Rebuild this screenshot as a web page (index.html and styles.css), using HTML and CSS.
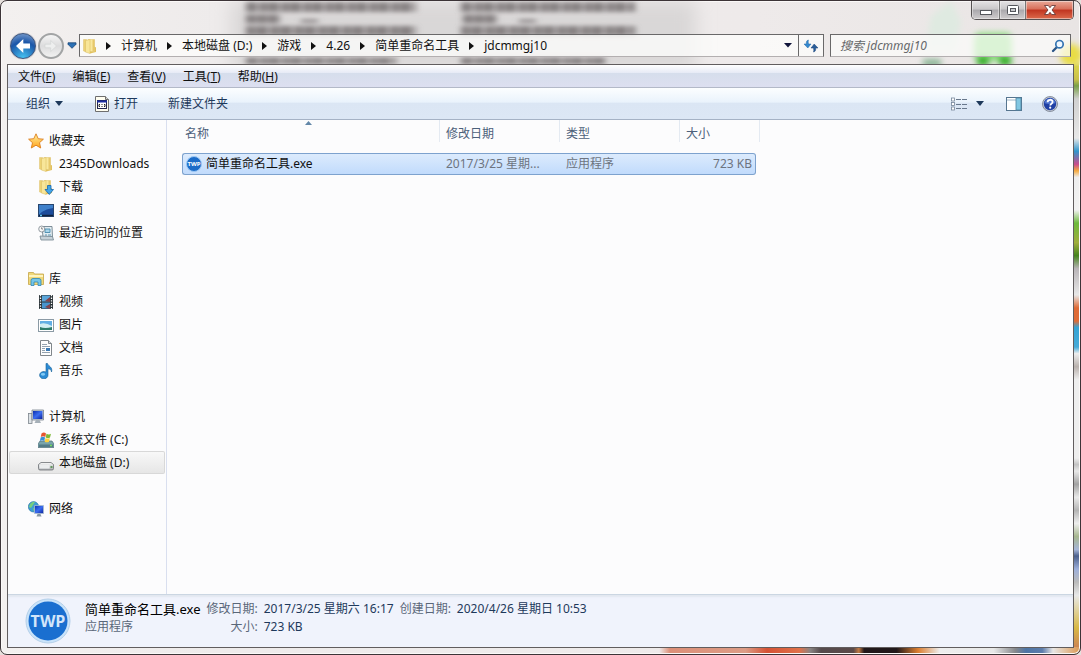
FILE: index.html
```html
<!DOCTYPE html>
<html lang="zh-CN">
<head>
<meta charset="utf-8">
<meta name="viewport" content="width=device-width, initial-scale=1">
<title>jdcmmgj10</title>
<link rel="stylesheet" href="styles.css">
</head>
<body>
<svg class="defs" aria-hidden="true">
  <defs>
    <linearGradient id="folder" x1="0" x2="1"><stop offset="0" stop-color="#f0d673"/><stop offset=".5" stop-color="#fbeca6"/><stop offset="1" stop-color="#dfb950"/></linearGradient>
    <linearGradient id="screen" x1="0" x2="1" y2="1"><stop offset="0" stop-color="#0c2fae"/><stop offset=".5" stop-color="#3b6df0"/><stop offset="1" stop-color="#0a1f9a"/></linearGradient>
    <linearGradient id="star" x2="0" y2="1"><stop offset="0" stop-color="#fff0a0"/><stop offset="1" stop-color="#ffa41c"/></linearGradient>
    <linearGradient id="disk" x2="0" y2="1"><stop offset="0" stop-color="#fafafa"/><stop offset="1" stop-color="#a9adb0"/></linearGradient>
    <symbol id="i-folder" viewBox="0 0 16 16"><path d="M1.500 1.500h3v12.500l-3-1z" fill="#edd273" stroke="#dcc070" stroke-width=".5"/><path d="M6 1.500h6.500v12H6z" fill="url(#folder)" stroke="#dfc36b" stroke-width=".5"/><path d="M3.500 2.500l4.500-1v14l-4.500-1.500z" fill="#f8e699" stroke="#d9bb5f" stroke-width=".5"/><path d="M12.500 8.500l1.500 1v4.500l-6 1.500v-2h4.500z" fill="#e2c15c"/></symbol>
  </defs>
</svg>
<div class="window">
  <svg class="backdrop" width="1000" height="64" viewBox="0 0 1000 64" aria-hidden="true">
    <defs>
      <filter id="soft" x="-20%" y="-50%" width="140%" height="200%"><feGaussianBlur stdDeviation="3 2"/></filter>
      <filter id="haze" x="-60%" y="-60%" width="220%" height="220%"><feGaussianBlur stdDeviation="9"/></filter>
      <filter id="glow" x="-60%" y="-60%" width="220%" height="220%"><feGaussianBlur stdDeviation="3"/></filter>
    </defs>
    <rect x="150" y="0" width="465" height="70" fill="#d9d7d7" filter="url(#haze)"/>
    <g filter="url(#soft)" stroke="#858081" fill="none">
      <path d="M165 6h170M380 6h174" stroke-width="10" stroke-dasharray="11 2 8 1"/>
      <path d="M165 18h34M382 18h34" stroke-width="9" stroke-dasharray="10 1"/>
      <path d="M220 20h17M438 20h17" stroke-width="3"/>
      <path d="M165 30h170M380 30h174" stroke-width="10" stroke-dasharray="9 1 12 2"/>
      <path d="M165 60h150M380 60h145" stroke-width="7" stroke-dasharray="12 2 7 1"/>
    </g>
    <g filter="url(#glow)">
      <path d="M850 15l20-15 10 20-6 30h-30z" fill="#dfeae1"/>
      <path d="M842 62h18" stroke="#7fae8b" stroke-width="7"/>
      <rect x="893" y="32" width="38" height="28" rx="6" fill="#86dc77"/>
      <path d="M896 60h12M918 60h12" stroke="#27ab19" stroke-width="9"/>
      <circle cx="990" cy="54" r="11" fill="#e9dd45"/>
    </g>
  </svg>
  <header class="titlebar">
    <div class="caption">
      <button class="cap" aria-label="最小化"><svg width="14" height="12"><rect x="1.500" y="6.500" width="11" height="4" fill="#fff" stroke="#55575c"/></svg></button>
      <button class="cap cap-max" aria-label="最大化"><svg width="14" height="12"><rect x="1.500" y="1.500" width="11" height="9" rx="1" fill="#fff" stroke="#55575c"/><rect x="4.500" y="4.500" width="5" height="3" fill="#c9c9cc" stroke="#55575c"/></svg></button>
      <button class="cap cap-close" aria-label="关闭"><svg width="14" height="12" viewBox="0 0 14 12"><path d="M1.500 1.500h3.800L7 3.700l1.700-2.200h3.800L9 6l3.500 4.500H8.700L7 8.300l-1.700 2.200H1.500L5 6z" fill="#fff" stroke="#5b3030" stroke-width=".8"/></svg></button>
    </div>
  </header>
  <div class="navrow">
    <div class="travel">
      <button class="back" aria-label="后退"><svg width="18" height="18" viewBox="0 0 18 18"><path d="M9.300 2L2 9l7.300 7v-4.500H16v-5H9.300z" fill="#fff"/></svg></button>
      <button class="forward" aria-label="前进"><svg width="18" height="18" viewBox="0 0 18 18"><path d="M8.700 3.500L14.500 9l-5.800 5.500v-3.700H3V7.200h5.700z" fill="#eeefef" stroke="#d3d5d6" stroke-width=".7"/></svg></button>
      <button class="recent" aria-label="最近的位置"><svg width="10" height="7" viewBox="0 0 10 7"><path d="M1 .8h8v1.500L5 6.300 1 2.300z" fill="#2b70b5" stroke="#1b4474" stroke-width=".8"/></svg></button>
    </div>
    <div class="address">
      <svg width="16" height="16"><use href="#i-folder"/></svg>
      <ol class="crumbs">
        <li><a href="#">计算机</a></li>
        <li><a href="#">本地磁盘 (D:)</a></li>
        <li><a href="#">游戏</a></li>
        <li><a href="#">4.26</a></li>
        <li><a href="#">简单重命名工具</a></li>
        <li><a href="#">jdcmmgj10</a></li>
      </ol>
      <button class="drop" aria-label="以前的位置"><svg width="8" height="5"><path d="M0 0h8L4 4.500z" fill="#10143a"/></svg></button>
      <button class="refresh" aria-label="刷新"><svg width="16" height="14" viewBox="0 0 16 14"><path d="M5.500 1C3.500 1.300 3.200 3 3.300 5H1l3.800 4L8 5H5.500C5.200 3.500 5 2 5.500 1z" fill="#3489cf" stroke="#2066a6" stroke-width=".5"/><path d="M10.500 13c2-.3 2.300-2 2.200-4H15l-3.800-4L8 9h2.500c.3 1.500.5 3 0 4z" fill="#2a5d99" stroke="#1d467c" stroke-width=".5"/></svg></button>
    </div>
    <form class="search">
      <input type="search" aria-label="搜索" placeholder="搜索 jdcmmgj10">
      <button type="button" aria-label="搜索"><svg width="14" height="14" viewBox="0 0 14 14"><path d="M2 12l4-4" stroke="#2a5587" stroke-width="2.300" stroke-linecap="round"/><circle cx="8.500" cy="5.200" r="3.700" fill="#eef7ff" stroke="#3474b2" stroke-width="1.700"/></svg></button>
    </form>
  </div>
  <div class="client">
    <div class="menubar">
      <button>文件(<u>F</u>)</button>
      <button>编辑(<u>E</u>)</button>
      <button>查看(<u>V</u>)</button>
      <button>工具(<u>T</u>)</button>
      <button>帮助(<u>H</u>)</button>
    </div>
    <div class="toolbar">
      <button class="organize">组织 <svg width="8" height="5"><path d="M0 0h8L4 5z" fill="#1e395b"/></svg></button>
      <button class="open"><svg width="14" height="16" viewBox="0 0 14 16"><path d="M.5.500h10l3 3v12H.5z" fill="#fffef0" stroke="#6e6e6e"/><path d="M10.500.5v3h3" fill="#d5d5cc" stroke="#6e6e6e"/><rect x="2.500" y="4.500" width="9" height="8" fill="#fff" stroke="#22264e"/><path d="M2 5.500h10" stroke="#1b2ca0" stroke-width="2"/><path d="M5 8.500h-1v2h1M9 8.500h1v2H9M7 8v1M7 10v1" stroke="#222" fill="none"/></svg>打开</button>
      <button>新建文件夹</button>
      <div class="tools">
        <button aria-label="更改视图"><svg width="16" height="14" viewBox="0 0 16 14"><g fill="#fff" stroke="#76869a" stroke-width=".8"><rect x=".5" y="1" width="3" height="3"/><rect x=".5" y="5.500" width="3" height="3"/><rect x=".5" y="10" width="3" height="3"/></g><path d="M5 2.500h5M11 2.500h5M5 7.500h5M11 7.500h5M5 11.500h5M11 11.500h5" stroke="#68788c"/></svg></button>
        <button class="viewdrop" aria-label="更多选项"><svg width="8" height="5"><path d="M0 0h8L4 5z" fill="#1e395b"/></svg></button>
        <button class="preview" aria-label="显示预览窗格"><svg width="16" height="14" viewBox="0 0 16 14"><rect x=".5" y=".5" width="15" height="13" fill="#fff" stroke="#56758f"/><path d="M1 3h9" stroke="#9eb6c8"/><rect x="10" y="1" width="5" height="12" fill="#82c7e2" stroke="#4f86a3" stroke-width=".8"/></svg></button>
        <button aria-label="帮助"><svg width="16" height="16" viewBox="0 0 16 16"><circle cx="8" cy="8" r="7.500" fill="#c3c9d6" stroke="#747c8c" stroke-width=".8"/><circle cx="8" cy="8" r="6.200" fill="#2040a4"/><path d="M2.500 7a5.600 5.600 0 0 1 11 0c-3 1.500-8 1.500-11 0z" fill="#4f74cf"/><path d="M5.600 6.200c0-3.200 5-3.200 5-.2 0 1.800-2.300 1.700-2.300 3.400" fill="none" stroke="#fff" stroke-width="1.800"/><circle cx="8.200" cy="11.700" r="1.100" fill="#fff"/></svg></button>
      </div>
    </div>
    <main class="panes">
      <nav class="side">
        <ul>
          <li><a class="root" href="#"><svg width="16" height="16" viewBox="0 0 16 16"><path d="M8 .8l2.200 4.900 5.200.5-3.900 3.500 1.200 5.300L8 12.200 3.300 15l1.200-5.300L.6 6.200l5.200-.5z" fill="url(#star)" stroke="#dc7e1c" stroke-width=".9" stroke-linejoin="round"/></svg>收藏夹</a></li>
          <li><a href="#"><svg width="16" height="16"><use href="#i-folder"/></svg>2345Downloads</a></li>
          <li><a href="#"><svg width="16" height="16" viewBox="0 0 16 16"><use href="#i-folder" width="16" height="16"/><path d="M9.500 6.500h3.500v4h2.500L11.300 15.500 7 10.500h2.500z" fill="#42a5e8" stroke="#1666ab" stroke-width=".8"/></svg>下载</a></li>
          <li><a href="#"><svg width="16" height="16" viewBox="0 0 16 16"><rect x=".5" y="2.500" width="15" height="12" fill="#1c4c9b" stroke="#28466e"/><path d="M1 3h14v3C9 7 4 9 1 13z" fill="#3f80ca"/><path d="M1 13.500h14" stroke="#10223f" stroke-width="1.600"/><path d="M2 13.500h2" stroke="#62c6ef" stroke-width="1.500"/></svg>桌面</a></li>
          <li><a href="#"><svg width="16" height="16" viewBox="0 0 16 16"><path d="M4 1.500h10l.5 10.500H5z" fill="#e3edf2" stroke="#71828d" stroke-width=".9"/><path d="M7 4h5v3.500H7zM7 10h2M10 10h3" fill="#a8d5ea" stroke="#4a8aab" stroke-width=".9"/><path d="M2 11l12.500.5 1 3.500H3z" fill="#c6d1d8" stroke="#74858f" stroke-width=".8"/><circle cx="3.700" cy="4" r="3" fill="#f8f8f8" stroke="#7c878e" stroke-width=".8"/><path d="M3.700 2.300V4H5" stroke="#555" stroke-width=".7" fill="none"/></svg>最近访问的位置</a></li>
        </ul>
        <ul>
          <li><a class="root" href="#"><svg width="16" height="16" viewBox="0 0 16 16"><path d="M.5 1.500h5l1 1.500h9v10.500H.5z" fill="#f0d878" stroke="#c5a447" stroke-width=".8"/><path d="M1 5h14" stroke="#fff4bd" stroke-width="2"/><path d="M3 14.500V9.500q0-2 2-2h6q2 0 2 2v5h-3V11H6v3.500z" fill="#74c5e8" stroke="#2f87b5" stroke-width=".8"/></svg>库</a></li>
          <li><a href="#"><svg width="16" height="16" viewBox="0 0 16 16"><rect x="1" y="1" width="14" height="14" fill="#2b3338"/><path d="M2.500 1v14M13.500 1v14" stroke="#fff" stroke-width="1.300" stroke-dasharray="1.300 1.300"/><rect x="4" y="1.500" width="8" height="6" fill="#5aa5da"/><rect x="4" y="8.500" width="8" height="6" fill="#4a95cd"/><path d="M12 3L7 7l5 1zM12 10l-5 3 5 2z" fill="#85434a"/></svg>视频</a></li>
          <li><a href="#"><svg width="16" height="16" viewBox="0 0 16 16"><rect x=".5" y="2.500" width="15" height="12" fill="#fff" stroke="#8b9aa5"/><rect x="2" y="4" width="12" height="9" fill="#62aee4"/><path d="M2 7q5-2 12 2v2H2z" fill="#d2edf3"/><path d="M2 10q5 2 12 0v3H2z" fill="#2d7b6b"/></svg>图片</a></li>
          <li><a href="#"><svg width="16" height="16" viewBox="0 0 16 16"><path d="M2.500.5h8l3 3v12h-11z" fill="#fdfdfd" stroke="#80868b"/><path d="M10.500.5v3h3" fill="#d4dade" stroke="#80868b"/><path d="M4 4.500h5M4 6.500h8M4 8.500h3M4 10.500h3M4 12.500h8" stroke="#94a2af"/><rect x="8" y="8" width="4" height="3" fill="#3979b4"/></svg>文档</a></li>
          <li><a href="#"><svg width="16" height="16" viewBox="0 0 16 16"><path d="M8 .5h1.500c1 3 5.500 3.500 4 8.500 0-2-1.500-3-3.500-3.200V12a4.200 3.700 0 1 1-2-3z" fill="#2b8bd5" stroke="#176297" stroke-width=".6"/><ellipse cx="5" cy="11.300" rx="2.200" ry="1.400" fill="#83cbf5"/></svg>音乐</a></li>
        </ul>
        <ul>
          <li><a class="root" href="#"><svg width="16" height="16" viewBox="0 0 16 16"><rect x=".5" y="4.500" width="3.500" height="10" fill="#dce2e6" stroke="#7d868d" stroke-width=".8"/><path d="M4 1h11.500v10H4z" fill="#cfd6dc" stroke="#76818b" stroke-width=".8"/><path d="M5 2h9.500v8H5z" fill="url(#screen)"/><path d="M8 11h3.500l1.500 3H6.500z" fill="#a6b0b8"/></svg>计算机</a></li>
          <li><a href="#"><svg width="16" height="16" viewBox="0 0 16 16"><path d="M2 9h12l2 3v3.500H0V12z" fill="#79a4ab" stroke="#526f78" stroke-width=".7"/><path d="M1 12.500h14v2.500H1z" fill="#537b87"/><path d="M12 13.500h2" stroke="#72e05d" stroke-width="1.500"/><path d="M3.500 1.500Q6-.5 8 1.500L7.300 5Q5 3.500 2.800 5z" fill="#e7552e"/><path d="M8.500 1.800q2.500 1.500 4.500 0L12 5.500q-2 1.300-4.300 0z" fill="#7eb936"/><path d="M2.700 5.500q2-1.500 4.400 0L6.300 9Q4 7.500 1.800 9z" fill="#398fd8"/><path d="M7.500 6q2.300 1.300 4.300 0L11 9.700q-2 1-4.300 0z" fill="#ffd13d"/></svg>系统文件 (C:)</a></li>
          <li><a class="current" href="#" aria-current="page"><svg width="16" height="16" viewBox="0 0 16 16"><path d="M3 7.500h10l2.500 2v4q0 1.500-1.500 1.500H2Q.5 15 .5 13.500v-4z" fill="url(#disk)" stroke="#6c7074" stroke-width=".8"/><path d="M1.500 10h10v3.500h-10z" fill="#ebedee"/><path d="M12.500 12h2" stroke="#4f8d48" stroke-width="1.700"/></svg>本地磁盘 (D:)</a></li>
        </ul>
        <ul>
          <li><a class="root" href="#"><svg width="16" height="16" viewBox="0 0 16 16"><circle cx="5.500" cy="5.800" r="5.200" fill="#3d9dd4" stroke="#2573a2" stroke-width=".6"/><path d="M2 3q3-3 5-2L5 4 3 7 1 6zM5 7l3 1-2 3z" fill="#78cf7c"/><path d="M6.500 4.500h9v8h-9z" fill="url(#screen)" stroke="#a9bccd" stroke-width=".8"/><path d="M9.500 13h3l1 2.500H8.500z" fill="#8797a4"/></svg>网络</a></li>
        </ul>
      </nav>
      <section class="files">
        <table>
          <colgroup><col class="c-name"><col class="c-date"><col class="c-type"><col class="c-size"></colgroup>
          <thead><tr>
            <th scope="col" aria-sort="ascending">名称<svg class="sort" width="7" height="5"><path d="M0 4l3.500-4L7 4z" fill="#6287a8"/></svg></th>
            <th scope="col">修改日期</th><th scope="col">类型</th><th scope="col">大小</th>
          </tr></thead>
          <tbody><tr>
            <td><span class="file"><svg width="16" height="16" viewBox="0 0 16 16"><circle cx="8" cy="8" r="7.500" fill="#1c6cc8" stroke="#9bc7f3"/><text class="logo" x="8" y="10" font-size="6" text-anchor="middle" fill="#fff">TWP</text></svg>简单重命名工具.exe</span></td>
            <td>2017/3/25 星期...</td><td>应用程序</td><td>723 KB</td>
          </tr></tbody>
        </table>
      </section>
    </main>
    <footer class="details">
      <svg width="46" height="46" viewBox="0 0 46 46"><circle cx="23" cy="23" r="22" fill="#c9e3fa" stroke="#b4cfe8"/><circle cx="23" cy="23" r="19.500" fill="#1a6fd0"/><text class="logo" x="23" y="29" font-size="16" text-anchor="middle" fill="#d3e6fa">TWP</text></svg>
      <div class="props">
        <strong>简单重命名工具.exe</strong><span class="key">修改日期:</span><span>2017/3/25 星期六 16:17</span><span class="key">创建日期:</span><span>2020/4/26 星期日 10:53</span>
        <span class="kind">应用程序</span><span class="key">大小:</span><span>723 KB</span>
      </div>
    </footer>
  </div>
</div>
</body>
</html>
```
FILE: styles.css
```css
* { box-sizing: border-box; }
body { margin: 0; background: #e6e0dc; }
body, button, input { font: 12px/18px "Noto Sans", "Noto Sans CJK SC", sans-serif; color: #111; }
button { border: 0; padding: 0; background: none; display: flex; align-items: center; justify-content: center; white-space: nowrap; }
a { color: inherit; text-decoration: none; }
ul, ol { list-style: none; margin: 0; padding: 0; }
svg { display: block; flex: none; }
.defs { position: absolute; width: 0; height: 0; }

.window {
  position: relative;
  display: flex;
  flex-direction: column;
  min-height: 100vh;
  padding: 0 6px 6px;
  border: 1px solid #3c3437;
  border-radius: 7px;
  overflow: hidden;
  box-shadow: inset 0 0 0 1px #fbf9f8;
  background:
    linear-gradient(90deg, transparent 61%, #dc8f78 62%, #dc9c86 69%, #d55235 71%, #e0714a 74%, #8a8584 75%, #554a4c 76%, #5b4a49 79%, #c07a44 79.500%, #21181a 80%, #21181a 83%, #dc7f31 85%, #eee 87%, #e8e8e8 92%, #86888c 94%, #4e75a5 95%, #5c7cab 96.500%, #e8e6e5 97.500%, #dc9852) bottom / 100% 7px no-repeat,
    linear-gradient(#e9e5e4 0, #e9e5e4 9%, #d9d34b 10%, #c9c04b 12%, #789f48 13%, #d0d0d0 15%, #e8e8e8 21%, #3196cc 23%, #c94d8d 25%, #f5ab40 26%, #eee 27%, #f2f2f2 32%, #6dba3c 34%, #a0ad3c 37%, #45831d 39%, #b9b5b8 41%, #e8e8e8 45%, #df6b36 47%, #df6b36 49%, #36a3d4 50%, #46abd8 53%, #eee 54%, #b9b1ad 56%, #eee 58%, #eee 70%, #c3c3c3 71%, #e9e9e9 72%, #a3a3a3 74%, #e9e9e9 76%, #b4b4b4 78%, #eee 80%, #a7b78f 82%, #a7b6d8 84%, #4c608c 85%, #9dafda 87%, #bbb 89%, #e8e8e8 91%, #d8b845 96%, #c97359) right / 7px 100% no-repeat,
    linear-gradient(90deg, #f3f0ef, #eeebeb 20%, #eeeaea 70%, #e9e5e4);
}
.backdrop { position: absolute; left: 80px; top: 0; }
.titlebar, .navrow, .client { position: relative; }

.titlebar { display: flex; justify-content: flex-end; height: 32px; }
.caption { display: flex; height: 19px; border: 1px solid #555152; border-top: 0; border-radius: 0 0 5px 5px; overflow: hidden; }
.cap { width: 27px; height: 100%; background: linear-gradient(#e5e3e4, #c9c7c9 45%, #aaa8ac 50%, #cfcccd); box-shadow: inset 0 0 0 1px #f3f1f180; }
.cap-max { border-left: 1px solid #777; border-right: 1px solid #777; }
.cap-close { width: 47px; background: linear-gradient(#e9a898, #d86e59 45%, #c03420 50%, #dc6a4c); }

.navrow { display: flex; align-items: center; height: 25px; margin-bottom: 6px; padding: 0 3px; }
.travel { display: flex; align-items: center; gap: 2px; }
.back, .forward { width: 26px; height: 26px; border-radius: 50%; }
.back { border: 1px solid #3c547c; background: radial-gradient(circle at 50% 100%, #47c4f3, #1b56a8 60%, #8aa9d4); box-shadow: 0 0 1px #667; }
.back svg, .forward svg { margin: 0 -1px; }
.forward { border: 2px solid #a2a4a5; background: linear-gradient(#f5f5f5, #dcdcdd 50%, #f1f1f1); }
.recent { width: 12px; height: 20px; }
.address { display: flex; flex: 1; align-items: center; height: 23px; margin-left: 1px; padding-left: 2px; border: 1px solid #696869; border-bottom-color: #b3afb0; background: #fcfcfbc8; }
.crumbs { display: flex; flex: 1; }
.crumbs li { display: flex; align-items: center; }
.crumbs li::before { content: ""; margin: 0 10px; border: solid transparent; border-width: 4px 0 4px 5px; border-left-color: #111; }
.crumbs li:first-child::before { margin-left: 8px; }
.drop { width: 20px; height: 100%; }
.refresh { width: 25px; height: 100%; border-left: 1px solid #696869; }
.search { display: flex; width: 241px; height: 23px; margin-left: 6px; border: 1px solid #696869; border-bottom-color: #b3afb0; background: #fcfcfbb8; }
.search input { flex: 1; min-width: 0; border: 0; padding: 0 0 0 9px; background: none; outline: 0; }
.search input::placeholder { color: #66686a; font-style: italic; opacity: 1; }
.search button { width: 24px; }

.client { display: flex; flex: 1; flex-direction: column; border: 1px solid #615d5e; background: #fcfcfd; }
.menubar { display: flex; gap: 1px; height: 23px; padding: 2px 0 0 2px; border-bottom: 1px solid #b3b9c8; background: linear-gradient(#fff, #e7ebf6 35%, #d6deec 38%, #dddff0); }
.menubar button { padding: 0 8px; color: #111; }
.toolbar { display: flex; align-items: center; height: 32px; padding: 0 15px 0 18px; border-bottom: 1px solid #a5b2c5; background: linear-gradient(#fcfeff, #eaf3fc 45%, #dbe6f4 50%, #dce7f5); }
.toolbar button { color: #1e395b; }
.organize { gap: 5px; margin-right: 32px; }
.open { gap: 5px; margin-right: 30px; }
.tools { display: flex; align-items: center; margin-left: auto; }
.viewdrop { margin: 0 22px 0 9px; }
.preview { margin-right: 20px; }

.panes { display: flex; flex: 1; }
.side { display: flex; flex-direction: column; gap: 23px; width: 159px; padding: 9px 1px; border-right: 1px solid #d9dfef; }
.side a { display: flex; align-items: center; gap: 5px; height: 23px; padding-left: 29px; border: 1px solid transparent; border-left: 0; border-radius: 2px; white-space: nowrap; }
.side a.root { padding-left: 19px; }
.side a.current { border-color: #d8d8d8; background: linear-gradient(#f8f8f8, #e6e6e6); box-shadow: inset 1px 0 #d8d8d8; }
.files { flex: 1; padding-left: 15px; }
table { width: 574px; table-layout: fixed; border-spacing: 0; }
.c-name { width: 258px; }
.c-date, .c-type { width: 120px; }
.c-size { width: 76px; }
th { position: relative; height: 33px; padding: 0 5px 5px 6px; text-align: left; font-weight: 400; color: #4c607a; background: linear-gradient(#e2e9f2, #e6ebf2) right 0 top 0 / 1px 22px no-repeat; }
th:first-child { padding-left: 3px; }
th:last-child { background: none; }
th:last-child::after { content: ""; position: absolute; right: -4px; top: 0; width: 1px; height: 22px; background: #e4eaf2; }
.sort { position: absolute; left: 123px; top: 1px; }
td { height: 22px; padding: 0 3px 0 6px; border: solid #7da2ce; border-width: 1px 0; color: #6d7480; background: linear-gradient(#dcebfd, #c1dbfc); white-space: nowrap; }
td:first-child { padding-left: 3px; border-left-width: 1px; border-radius: 3px 0 0 3px; color: #111; }
td:last-child { border-right-width: 1px; border-radius: 0 3px 3px 0; text-align: right; }
.file { display: flex; align-items: center; gap: 4px; }
.logo { font-family: "Open Sans", sans-serif; font-weight: 700; }

.details { display: flex; align-items: center; gap: 14px; height: 53px; padding-left: 17px; border-top: 1px solid #cbd6e2; background: #f0f3fc; box-shadow: inset 0 2px 2px #e2e7f0; }
.props { display: grid; grid-template-columns: repeat(5, auto); column-gap: 6px; margin-bottom: 6px; color: #1e395b; white-space: nowrap; }
.props strong { font-size: 13px; font-weight: 400; color: #000; }
.key { text-align: right; }
.key, .kind { color: #5a6779; }
```
